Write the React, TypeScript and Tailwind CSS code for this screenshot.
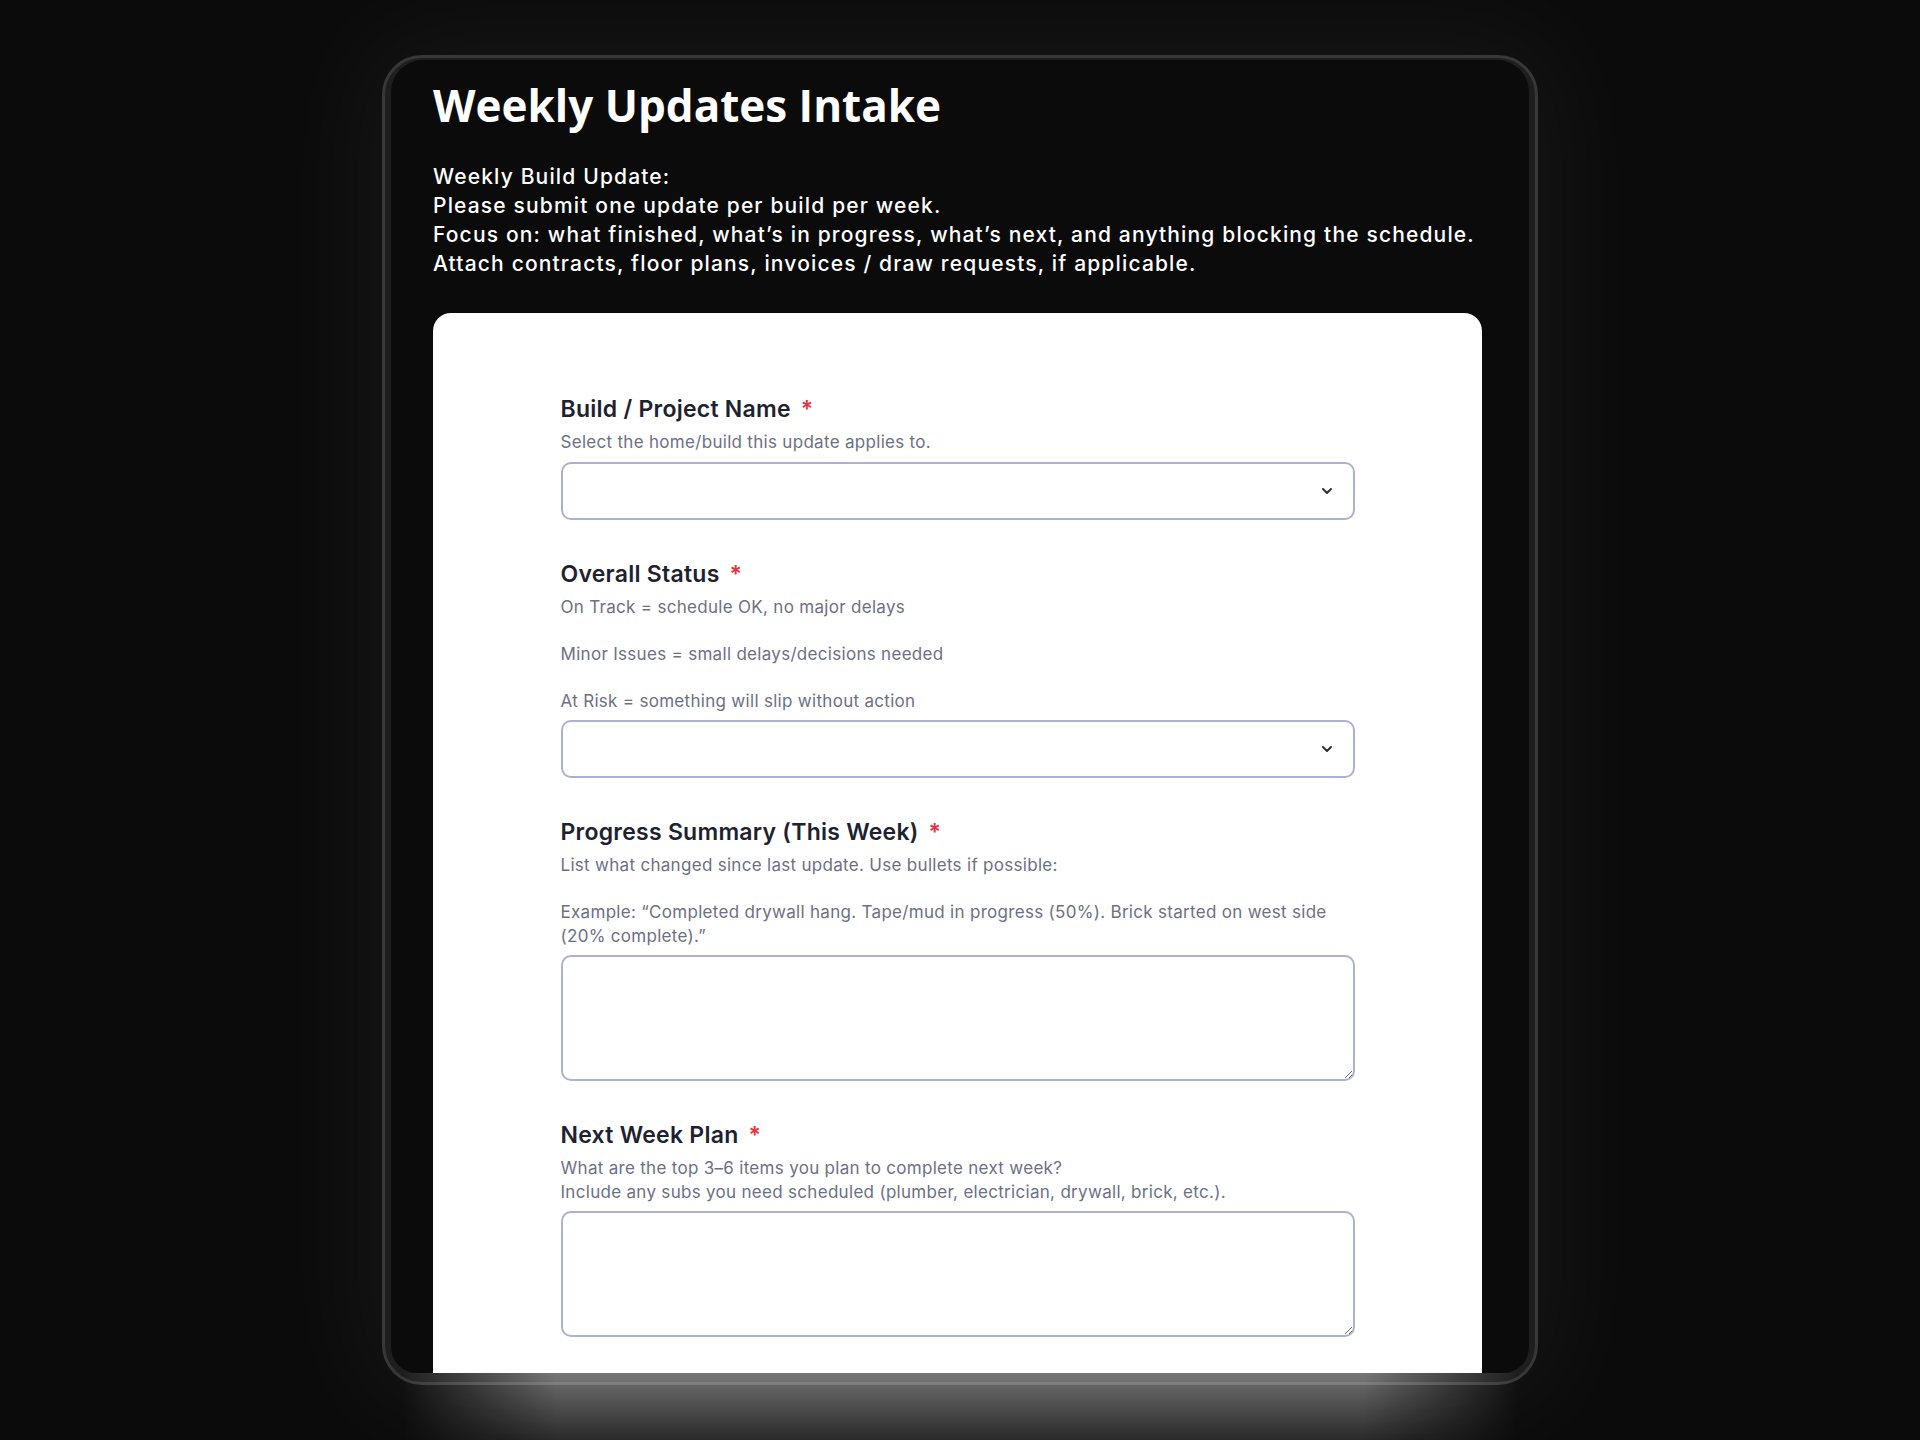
import React from "react";

function Chevron() {
  return (
    <svg
      width="12"
      height="8"
      viewBox="0 0 12 8"
      fill="none"
      className="pointer-events-none absolute right-[22px] top-1/2 -translate-y-1/2"
    >
      <path d="M2 2 L6 6 L10 2" stroke="#2b2f3a" strokeWidth="2" strokeLinecap="round" strokeLinejoin="round" />
    </svg>
  );
}

function Label({ children }: { children: React.ReactNode }) {
  return (
    <div className="mb-[7px] text-[23px] leading-[30px] font-semibold tracking-[0.25px] text-[#1e2230]">
      {children}
      <span className="ml-[10px] text-[#e5343d]">*</span>
    </div>
  );
}

function Desc({ children }: { children: React.ReactNode }) {
  return <div className="mb-[7px] text-[17px] leading-[23.5px] tracking-[0.3px] text-[#6c7085]">{children}</div>;
}

function SelectBox() {
  return (
    <div className="relative">
      <select className="block h-[58px] w-full appearance-none rounded-[10px] border-2 border-[#adb0d4] bg-white px-4 outline-none" />
      <Chevron />
    </div>
  );
}

function TextArea() {
  return (
    <textarea className="block h-[126px] w-full rounded-[10px] border-2 border-[#adb0d4] bg-white px-4 py-3 outline-none" />
  );
}

export default function App() {
  return (
    <div className="relative h-[1440px] w-full overflow-hidden bg-[#0b0b0b] font-['Inter',sans-serif]">
      <div className="relative mx-auto mt-[55px] h-[1330px] w-[1156px] rounded-[40px] border-[3px] border-[#383838] bg-[#1e1e1e] px-[6px] pt-[2px] pb-[9px] shadow-[0_0_110px_30px_rgba(255,255,255,0.045)]">
        <div className="h-full overflow-hidden rounded-t-[32px] rounded-b-[26px] bg-[#0b0b0b] pt-[23px] pl-[42px] pr-[47px]">
          <h1 className="font-['Open_Sans',sans-serif] text-[44px] leading-[44px] font-bold text-white">
            Weekly Updates Intake
          </h1>
          <div className="mt-[35px] text-[21px] leading-[29px] font-medium tracking-[1.16px] text-white">
            <div>Weekly Build Update:</div>
            <div>Please submit one update per build per week.</div>
            <div>Focus on: what finished, what’s in progress, what’s next, and anything blocking the schedule.</div>
            <div>Attach contracts, floor plans, invoices / draw requests, if applicable.</div>
          </div>
          <div className="mt-[35px] rounded-[18px] bg-white pt-[81px] pb-[160px]">
            <div className="mx-auto flex w-[794px] flex-col gap-[39px]">
              <div>
                <Label>Build / Project Name</Label>
                <Desc>Select the home/build this update applies to.</Desc>
                <SelectBox />
              </div>
              <div>
                <Label>Overall Status</Label>
                <Desc>
                  <p>On Track = schedule OK, no major delays</p>
                  <p className="mt-[23.5px]">Minor Issues = small delays/decisions needed</p>
                  <p className="mt-[23.5px]">At Risk = something will slip without action</p>
                </Desc>
                <SelectBox />
              </div>
              <div>
                <Label>Progress Summary (This Week)</Label>
                <Desc>
                  <p>List what changed since last update. Use bullets if possible:</p>
                  <p className="mt-[23.5px]">
                    Example: “Completed drywall hang. Tape/mud in progress (50%). Brick started on west side (20% complete).”
                  </p>
                </Desc>
                <TextArea />
              </div>
              <div>
                <Label>Next Week Plan</Label>
                <Desc>
                  <p>What are the top 3–6 items you plan to complete next week?</p>
                  <p>Include any subs you need scheduled (plumber, electrician, drywall, brick, etc.).</p>
                </Desc>
                <TextArea />
              </div>
            </div>
          </div>
        </div>
      </div>
      <div className="pointer-events-none absolute left-[400px] top-[1373px] h-[67px] w-[1120px] bg-gradient-to-b from-[rgba(255,255,255,0.40)] to-[rgba(255,255,255,0.12)] [mask-image:linear-gradient(to_right,transparent,black_14%,black_86%,transparent)]" />
    </div>
  );
}
